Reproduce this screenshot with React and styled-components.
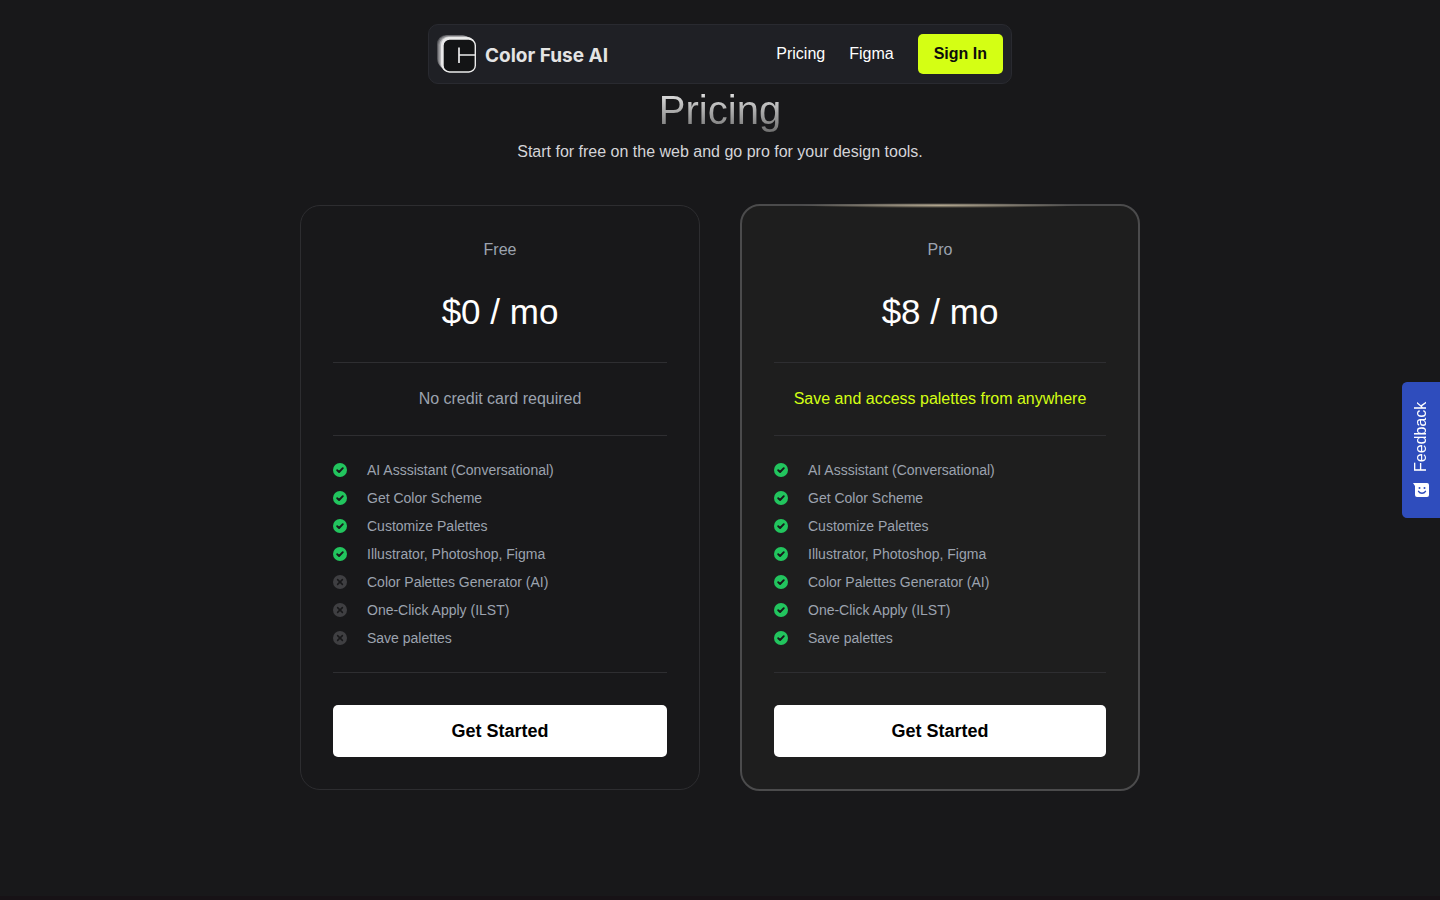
import React from 'react';
import styled, { createGlobalStyle } from 'styled-components';

const Global = createGlobalStyle`
  * { box-sizing: border-box; }
  body {
    margin: 0;
    background: #18181a;
    color: #fff;
    font: 16px/24px "Liberation Sans", Arial, sans-serif;
  }
  h1, h2, p, ul { margin: 0; padding: 0; font-weight: 400; }
  a { color: inherit; text-decoration: none; }
  button { font-family: inherit; border: 0; cursor: pointer; }
`;

const Page = styled.div`
  min-height: 100vh;
  display: flex;
  flex-direction: column;
  border-bottom: 4px solid #171216;
`;

const Header = styled.header`
  display: flex;
  align-items: center;
  justify-content: space-between;
  width: 100%;
  max-width: 584px;
  height: 60px;
  margin: 24px auto 0;
  padding: 0 8px;
  background: #1f2025;
  border: 1px solid #292a30;
  border-radius: 10px;
`;

const Brand = styled.a`
  display: flex;
  align-items: center;
  gap: 8px;
  color: #e4e4e4;
  font: 700 19px/24px Inter, sans-serif;
  svg { display: block; }
`;

const BrandName = styled.span`
  padding-top: 4px;
`;

const Nav = styled.nav`
  display: flex;
  align-items: center;
  gap: 24px;
`;

const SignIn = styled.button`
  height: 40px;
  padding: 0 16px;
  border-radius: 5px;
  background: #d4ff14;
  color: #0c0c0c;
  font-size: 16px;
  font-weight: 700;
`;

const Main = styled.main`
  display: flex;
  flex-direction: column;
  align-items: center;
  padding: 2px 20px 40px;
`;

const Title = styled.h1`
  font-size: 40px;
  line-height: 48px;
  color: transparent;
  background: linear-gradient(180deg, #f4f4f4, #6a6a6a);
  background-clip: text;
`;

const Subtitle = styled.p`
  margin-top: 6px;
  color: #d4d4d8;
`;

const Plans = styled.div`
  display: flex;
  flex-wrap: wrap;
  align-items: center;
  justify-content: center;
  gap: 40px;
  width: 100%;
  margin-top: 40px;
`;

const Card = styled.section`
  position: relative;
  width: 100%;
  max-width: 400px;
  padding: 32px;
  text-align: center;
  border: ${(p) => (p.$featured ? '2px solid #4b4b4c' : '1px solid #2d2d30')};
  border-radius: 20px;
  background: ${(p) => (p.$featured ? '#1e1e1e' : 'transparent')};
`;

const Glow = styled.span`
  position: absolute;
  top: -3px;
  left: 15%;
  right: 15%;
  height: 5px;
  background: radial-gradient(closest-side, #b0a48c, rgba(176, 164, 140, 0));
`;

const PlanName = styled.h2`
  color: #9ca3af;
  font-size: 16px;
  line-height: 24px;
`;

const Price = styled.p`
  padding: 30px 0;
  font-size: 35px;
  line-height: 40px;
`;

const Note = styled.p`
  padding: 24px 0;
  border: solid #2e2e31;
  border-width: 1px 0;
  color: ${(p) => (p.$featured ? '#d4ff14' : '#9ca3af')};
`;

const Features = styled.ul`
  display: grid;
  gap: 8px;
  padding: 24px 0;
  border-bottom: 1px solid #2e2e31;
  list-style: none;
`;

const Feature = styled.li`
  display: flex;
  align-items: center;
  gap: 20px;
  color: #9ca3af;
  font-size: 14px;
  line-height: 20px;
`;

const Start = styled.button`
  width: 100%;
  height: 52px;
  margin-top: 32px;
  border-radius: 5px;
  background: #fff;
  color: #000;
  font-size: 18px;
  font-weight: 700;
`;

const Feedback = styled.button`
  position: fixed;
  right: 0;
  top: 50%;
  display: flex;
  align-items: center;
  justify-content: center;
  gap: 10px;
  width: 38px;
  height: 136px;
  padding: 0;
  border-radius: 0 5px 5px 0;
  background: #2f4dbd;
  color: #fff;
  font-size: 16px;
  line-height: 20px;
  writing-mode: vertical-rl;
  transform: translateY(-50%) rotate(180deg);
`;

const Logo = () => (
  <svg width="40" height="40" viewBox="0 0 40 40" aria-hidden="true">
    <rect x="0" y="1" width="34" height="33" rx="9" fill="#55555a" />
    <rect x="1" y="1.5" width="34" height="34" rx="9" fill="#808084" />
    <rect x="2.5" y="2.2" width="34.5" height="34.5" rx="9" fill="#b4b4b6" />
    <rect x="4" y="3" width="34" height="35" rx="8" fill="#e8e8e8" />
    <rect x="6" y="5" width="32.3" height="33" rx="6.5" fill="#131415" stroke="#ececec" strokeWidth="1.4" />
    <path d="M22 13.5V29M22 21H38" fill="none" stroke="#ececec" strokeWidth="1.7" />
  </svg>
);

const Status = ({ included }) => (
  <svg width="14" height="14" viewBox="0 0 14 14" role="img" aria-label={included ? 'Included' : 'Not included'}>
    <circle cx="7" cy="7" r="7" fill={included ? '#22c55e' : '#3f3f42'} />
    <path
      d={included ? 'M4.2 7.2l1.9 1.8L9.8 5.2' : 'M4.6 4.6l4.8 4.8M9.4 4.6L4.6 9.4'}
      fill="none"
      stroke="#18181a"
      strokeWidth={included ? 1.9 : 1.5}
      strokeLinecap="round"
      strokeLinejoin="round"
    />
  </svg>
);

const Smile = () => (
  <svg width="16" height="16" viewBox="0 0 16 16" aria-hidden="true">
    <g transform="rotate(180 8 8)">
      <path d="M0 1h14a2 2 0 0 1 2 2v10a2 2 0 0 1-2 2H4a2 2 0 0 1-2-2V4z" fill="#fff" />
      <circle cx="6.5" cy="6" r="1" fill="#2f4dbd" />
      <circle cx="11.5" cy="6" r="1" fill="#2f4dbd" />
      <path d="M5.5 9.3c1.6 2.6 5.4 2.6 7 0" fill="none" stroke="#2f4dbd" strokeWidth="1.3" strokeLinecap="round" />
    </g>
  </svg>
);

const features = [
  'AI Asssistant (Conversational)',
  'Get Color Scheme',
  'Customize Palettes',
  'Illustrator, Photoshop, Figma',
  'Color Palettes Generator (AI)',
  'One-Click Apply (ILST)',
  'Save palettes',
];

const plans = [
  { name: 'Free', price: '$0 / mo', note: 'No credit card required', included: 4 },
  { name: 'Pro', price: '$8 / mo', note: 'Save and access palettes from anywhere', included: 7, featured: true },
];

const Plan = ({ name, price, note, included, featured }) => (
  <Card $featured={featured}>
    {featured && <Glow />}
    <PlanName>{name}</PlanName>
    <Price>{price}</Price>
    <Note $featured={featured}>{note}</Note>
    <Features>
      {features.map((text, i) => (
        <Feature key={text}>
          <Status included={i < included} />
          {text}
        </Feature>
      ))}
    </Features>
    <Start type="button">Get Started</Start>
  </Card>
);

export default function App() {
  return (
    <Page>
      <Global />
      <Header>
        <Brand href="#">
          <Logo />
          <BrandName>Color Fuse AI</BrandName>
        </Brand>
        <Nav>
          <a href="#pricing">Pricing</a>
          <a href="#figma">Figma</a>
          <SignIn type="button">Sign In</SignIn>
        </Nav>
      </Header>
      <Main>
        <Title>Pricing</Title>
        <Subtitle>Start for free on the web and go pro for your design tools.</Subtitle>
        <Plans>
          {plans.map((plan) => (
            <Plan key={plan.name} {...plan} />
          ))}
        </Plans>
      </Main>
      <Feedback type="button">
        <Smile />
        Feedback
      </Feedback>
    </Page>
  );
}
